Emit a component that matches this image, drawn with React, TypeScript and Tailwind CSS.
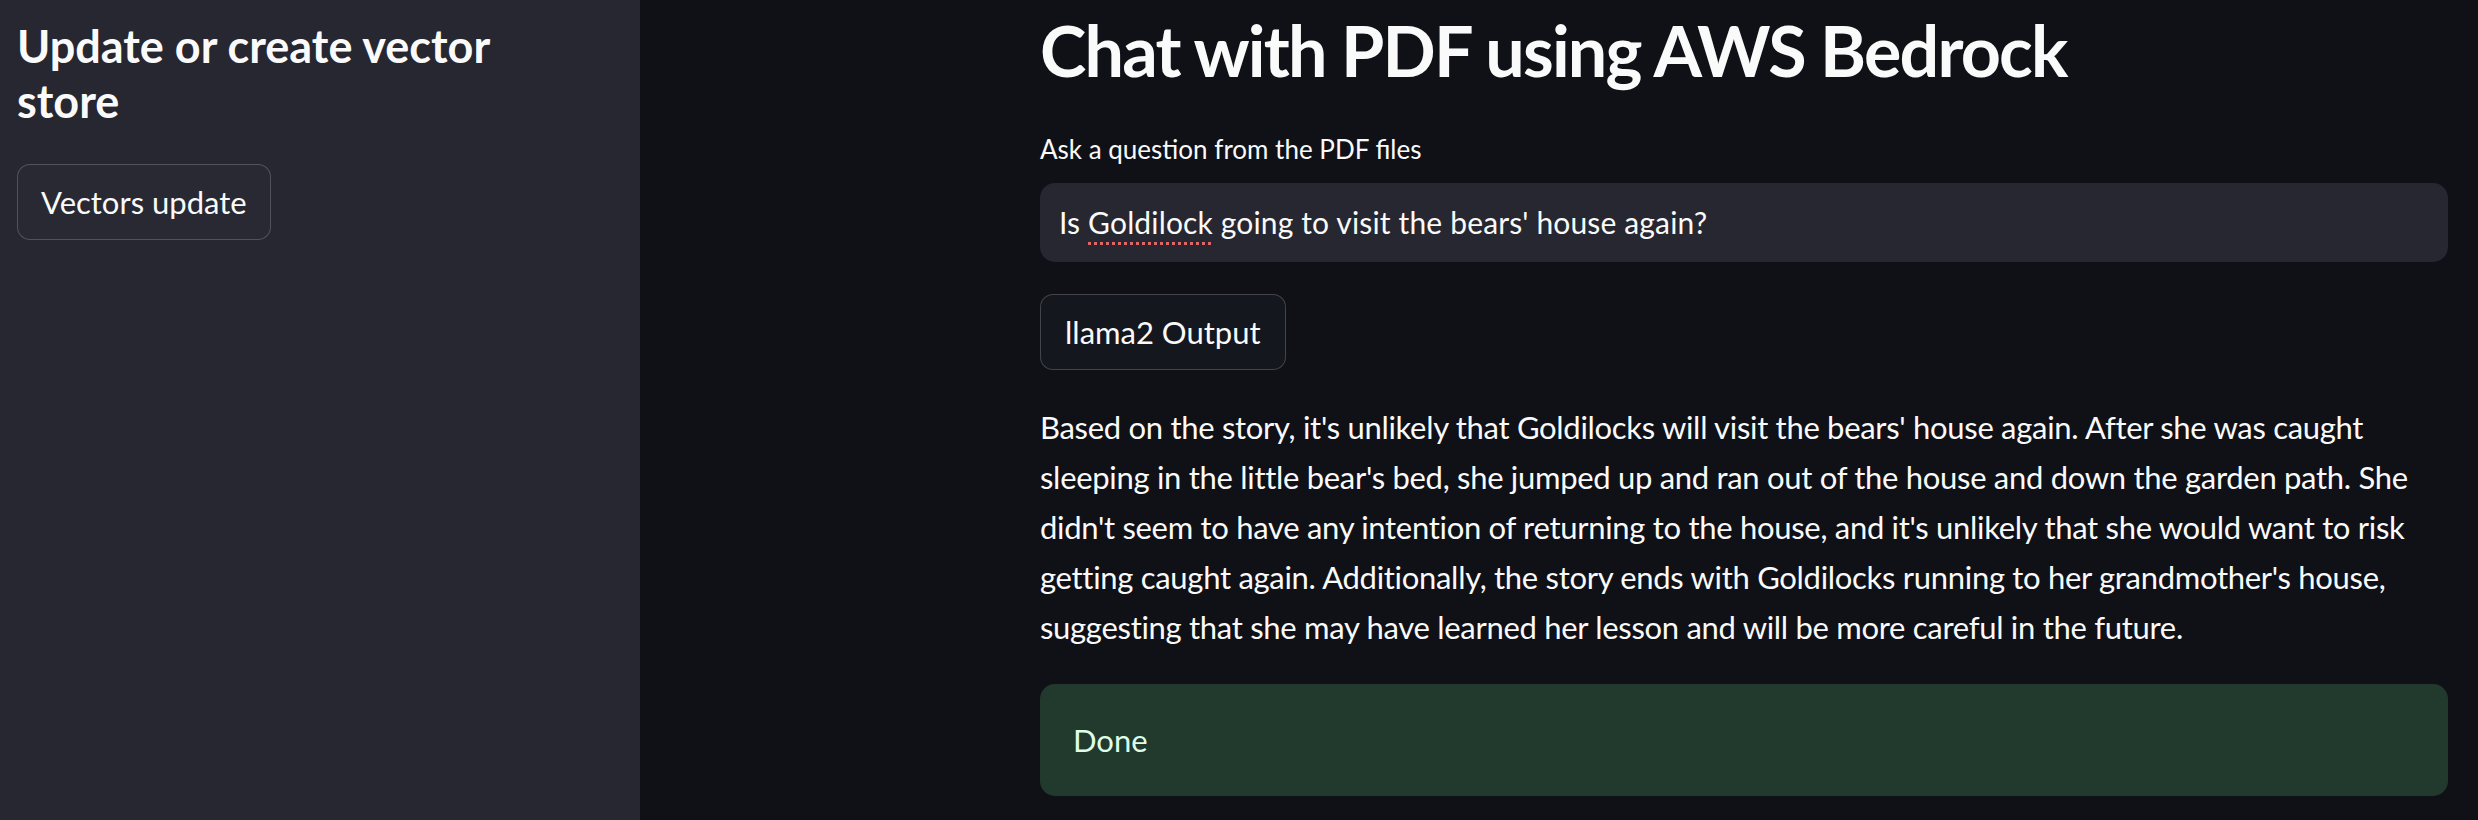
import React from "react";

const font = { fontFamily: "Lato, 'Noto Sans', sans-serif" };

export default function App() {
  return (
    <div className="flex w-full h-[820px] overflow-hidden bg-[#0f1117] text-[#fafafa]" style={font}>
      <aside className="w-[640px] shrink-0 bg-[#262730] pl-[17px] pt-[19px]">
        <h2 className="w-[560px] text-[45px] leading-[55px] font-bold">
          Update or create vector store
        </h2>
        <button className="mt-[35px] rounded-[13px] border border-[rgba(250,250,250,0.2)] bg-[#282933] px-[23px] py-[12px] text-[31px] leading-[50px] text-[#fafafa]">
          Vectors update
        </button>
      </aside>
      <main className="flex-1 pl-[400px] pr-[30px] pt-[8px]">
        <h1 className="text-[70px] leading-[1.2] font-bold tracking-[-1.8px]">
          Chat with PDF using AWS Bedrock
        </h1>
        <div className="mt-[42px] text-[26px] leading-[1.2]">Ask a question from the PDF files</div>
        <div className="mt-[18px] flex h-[79px] items-center rounded-[15px] bg-[#262730] px-[19px] text-[30px] tracking-[0.15px]">
          <span>
            Is{" "}
            <span className="underline decoration-dotted decoration-[#e06666] decoration-[3px] underline-offset-[8px]">
              Goldilock
            </span>{" "}
            going to visit the bears' house again?
          </span>
        </div>
        <button className="mt-[32px] rounded-[13px] border border-[rgba(250,250,250,0.2)] bg-[#15171f] px-[24px] py-[12px] text-[31px] leading-[50px] text-[#fafafa]">
          llama2 Output
        </button>
        <p className="mt-[32px] text-[31px] leading-[50px] tracking-[-0.3px]">
          Based on the story, it's unlikely that Goldilocks will visit the bears' house again. After she was caught
          sleeping in the little bear's bed, she jumped up and ran out of the house and down the garden path. She
          didn't seem to have any intention of returning to the house, and it's unlikely that she would want to risk
          getting caught again. Additionally, the story ends with Goldilocks running to her grandmother's house,
          suggesting that she may have learned her lesson and will be more careful in the future.
        </p>
        <div className="mt-[32px] h-[112px] rounded-[15px] bg-[#223a2e] px-[33px] py-[31px] text-[31px] leading-[50px] text-[#dffde9]">
          Done
        </div>
      </main>
    </div>
  );
}
